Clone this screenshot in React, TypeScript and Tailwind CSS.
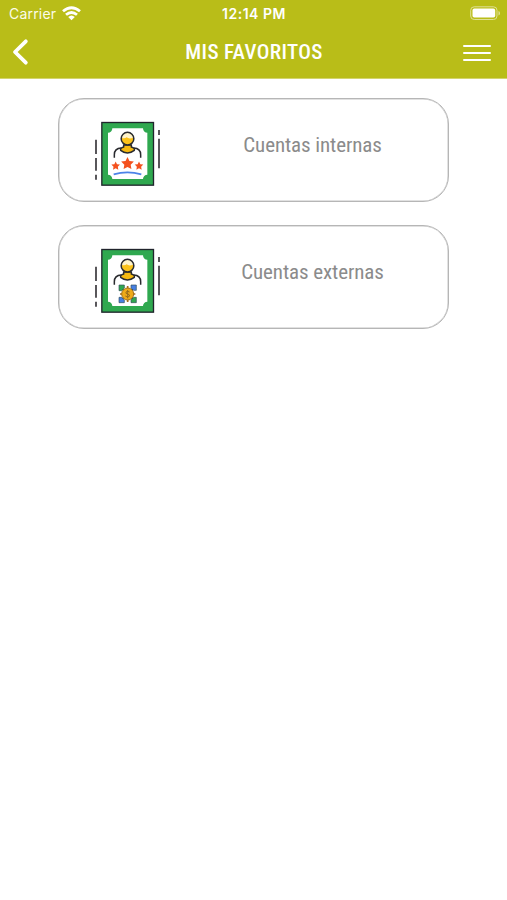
import type { ReactNode } from 'react';

const CONDENSED = "font-['Roboto_Condensed','Roboto',sans-serif] font-stretch-[75%]";

function Star({ x, y, r }: { x: number; y: number; r: number }) {
  const points = Array.from({ length: 10 }, (_, i) => {
    const radius = i % 2 ? r * 0.5 : r;
    const a = (Math.PI / 5) * i - Math.PI / 2;
    return `${x + radius * Math.cos(a)},${y + radius * Math.sin(a)}`;
  }).join(' ');
  return <polygon points={points} fill="#f4511e" />;
}

function Certificate({ children }: { children: ReactNode }) {
  return (
    <svg width="85" height="82" viewBox="0 0 255 246" fill="none" className="shrink-0">
      <rect x="50.5" y="31.5" width="155" height="188" fill="#2fa84f" stroke="#20242c" strokeWidth="4" />
      <path d="M82 49H174A13 13 0 0 0 187 62V188A13 13 0 0 0 174 201H82A13 13 0 0 0 69 188V62A13 13 0 0 0 82 49Z" fill="#fff" />
      <path d="M33 83V126M33 138V176M33 188V203M222 54V69M222 80V169" stroke="#39363b" strokeWidth="5" />
      <path d="M116 99V105Q105 108 107 115Q127 131 148 115Q150 108 139 105V99Z" fill="#f5b911" stroke="#292a2e" strokeWidth="4.500" />
      <path d="M88 137V128Q88 109 109 108M146 108Q167 109 167 128V137" stroke="#292a2e" strokeWidth="4.500" />
      <circle cx="127.500" cy="80" r="19" fill="#fbc21b" />
      <path d="M110 77Q112 62 127.500 62Q143 62 145 77Q132 82 125 76Q118 81 110 77Z" fill="#fff3c9" />
      <circle cx="127.500" cy="80" r="19" stroke="#292a2e" strokeWidth="4.500" />
      {children}
    </svg>
  );
}

function InternalIcon() {
  return (
    <Certificate>
      <Star x={127.5} y={155} r={20} />
      <Star x={92} y={162} r={13.5} />
      <Star x={162} y={162} r={13.5} />
      <path d="M86 187Q127 175 169 187" stroke="#4c83e8" strokeWidth="5" />
    </Certificate>
  );
}

function ExternalIcon() {
  return (
    <Certificate>
      <path d="M108 146L148 184M148 146L108 184" stroke="#34434c" strokeWidth="5" />
      <g stroke="#34505b" strokeWidth="2">
        <path d="M102 138H118V147L110 155H102Z" fill="#2fa84f" />
        <path d="M138 138H154V154H146L138 147Z" fill="#477fe2" />
        <path d="M102 175H110L118 183V191H102Z" fill="#477fe2" />
        <path d="M146 175H154V191H138V183Z" fill="#2fa84f" />
      </g>
      <path d="M128 141V189M105 165H151" stroke="#a96b19" strokeWidth="5" />
      <circle cx="128" cy="165" r="18" fill="#efaa19" stroke="#a0701c" strokeWidth="3" />
      <path d="M134 159Q127 154 123 159Q121 164 128 165Q136 167 133 172Q128 177 121 171M128 153V178" stroke="#8a631c" strokeWidth="2.500" />
    </Certificate>
  );
}

function AccountCard({ icon, label }: { icon: ReactNode; label: string }) {
  return (
    <button className="flex h-[104px] w-[391px] items-start rounded-[26px] border border-[#b6b6b6] bg-white pl-[26px] pt-[13px] shadow-[inset_0_0_0_0.500px_#c4c4c4]">
      {icon}
      <span className={`mt-[19px] flex-1 pl-[7px] text-center text-[21px] leading-7 tracking-[-0.100px] text-[#8b8b8b] ${CONDENSED}`}>
        {label}
      </span>
    </button>
  );
}

export default function App() {
  return (
    <div className="min-h-[900px] w-full bg-white">
      <header className="h-[79px] border-b border-[#d3d46c] bg-[#b9bd18] text-white">
        <div className="grid h-[27px] grid-cols-3 items-center pl-[9px] pr-[6px] font-['Inter',sans-serif]">
          <div className="flex items-center gap-[6px] text-[14px] tracking-[0.200px] text-[#fcfce8]">
            <span>Carrier</span>
            <svg width="19" height="15" viewBox="0 0 19 15" fill="none" stroke="#fff" strokeWidth="2.800">
              <path d="M1 5.300Q9.500-1.900 18 5.300M4 8.800Q9.500 4.100 15 8.800" />
              <path d="M6.200 11Q9.500 8 12.800 11L9.500 14.300Z" fill="#fff" stroke="none" />
            </svg>
          </div>
          <div className="-ml-[2px] text-center text-[14px] font-semibold tracking-[0.500px]">12:14 PM</div>
          <svg className="justify-self-end" width="31" height="15" viewBox="0 0 31 15" fill="none">
            <rect x="0.700" y="0.800" width="26.300" height="12.700" rx="3.500" stroke="#dfe096" strokeWidth="1" />
            <rect x="2.500" y="2.600" width="22.700" height="9" rx="1.800" fill="#fff" />
            <path d="M28.500 5V9.500Q30 9 30 7.250T28.500 5" fill="#dfe096" />
          </svg>
        </div>
        <div className="grid h-[50px] grid-cols-[60px_1fr_60px] items-center">
          <button aria-label="Volver" className="pl-3">
            <svg width="18" height="28" viewBox="0 0 18 28" fill="none" stroke="#fff" strokeWidth="3.800" strokeLinecap="round" strokeLinejoin="round">
              <path d="M13.800 3.300L3 14L13.800 24.700" />
            </svg>
          </button>
          <h1 className={`pl-px text-center text-[21px] font-[480] leading-7 tracking-[0.350px] ${CONDENSED}`}>MIS FAVORITOS</h1>
          <button aria-label="Menú" className="flex flex-col gap-[4.500px] pl-[16px] pt-[2px]">
            <span className="h-[2.600px] w-[28px] rounded-full bg-white" />
            <span className="h-[2.600px] w-[28px] rounded-full bg-white" />
            <span className="h-[2.600px] w-[28px] rounded-full bg-white" />
          </button>
        </div>
      </header>
      <main className="flex flex-col items-center gap-[23px] pt-[19px]">
        <AccountCard icon={<InternalIcon />} label="Cuentas internas" />
        <AccountCard icon={<ExternalIcon />} label="Cuentas externas" />
      </main>
    </div>
  );
}
